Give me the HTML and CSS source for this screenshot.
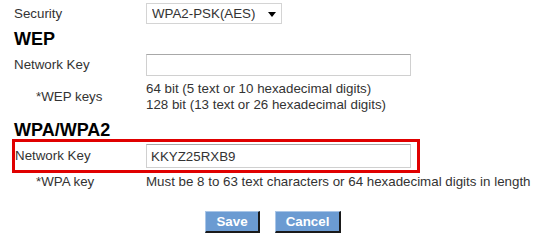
FILE: index.html
```html
<!DOCTYPE html>
<html lang="en">
<head>
    <meta charset="UTF-8">
    <title>Wireless Security</title>
    <link rel="stylesheet" href="styles.css">
</head>
<body>
    <div class="form">
        <div class="row row-security">
            <label class="label">Security</label>
            <div class="select-wrap">
                <select class="select">
                    <option>WPA2-PSK(AES)</option>
                </select>
                <svg class="select-arrow" width="8" height="5" viewBox="0 0 8 5"><path d="M0 0h8L4 5z" fill="#000"/></svg>
            </div>
        </div>

        <h2 class="heading heading-wep">WEP</h2>
        <div class="row row-key">
            <label class="label">Network Key</label>
            <input class="field" type="text" value="">
        </div>
        <div class="row row-hint row-hint-wep">
            <span class="label sub">*WEP keys</span>
            <div class="hint">
                64 bit (5 text or 10 hexadecimal digits)<br>
                128 bit (13 text or 26 hexadecimal digits)
            </div>
        </div>

        <h2 class="heading heading-wpa">WPA/WPA2</h2>
        <div class="row highlight">
            <label class="label">Network Key</label>
            <input class="field field-wpa" type="text" value="KKYZ25RXB9">
        </div>
        <div class="row row-hint row-hint-wpa">
            <span class="label sub">*WPA key</span>
            <div class="hint">Must be 8 to 63 text characters or 64 hexadecimal digits in length</div>
        </div>

        <div class="actions">
            <button class="btn btn-save">Save</button>
            <button class="btn btn-cancel">Cancel</button>
        </div>
    </div>
</body>
</html>
```

FILE: styles.css
```css
body {
    margin: 0;
    background: #fff;
    color: #333;
    font-family: Arial, "Liberation Sans", sans-serif;
    font-size: 13.33px;
}
.form {
    width: 541px;
    padding: 3px 0 0 14px;
    box-sizing: border-box;
}
.row {
    display: flex;
    align-items: center;
}
.label {
    width: 132px;
    flex: none;
    line-height: 16px;
}
.label.sub {
    padding-left: 22px;
    box-sizing: border-box;
}
.row-security {
    height: 21px;
}
.select-wrap {
    position: relative;
}
.select {
    appearance: none;
    -webkit-appearance: none;
    width: 136px;
    height: 21px;
    margin: 0;
    padding: 0 0 0 5px;
    border: 1px solid #d4d4d4;
    border-radius: 0;
    background: #fff;
    color: #333;
    font-family: inherit;
    font-size: 13.33px;
}
.select-arrow {
    position: absolute;
    right: 6px;
    top: 9px;
    pointer-events: none;
}
.heading {
    margin: 0;
    color: #000;
    font-size: 18px;
    font-weight: bold;
}
.heading-wep {
    margin-top: 5px;
    line-height: 20px;
}
.row-key {
    margin-top: 5px;
}
.field {
    width: 265px;
    height: 22px;
    margin: 0;
    padding: 0 4px;
    box-sizing: border-box;
    border: 1px solid #d0d0d0;
    border-top-color: #a8a8a8;
    color: #333;
    font-family: inherit;
    font-size: 13.33px;
}
.row-hint {
    line-height: 16px;
}
.row-hint-wep {
    margin-top: 5px;
}
.heading-wpa {
    margin-top: 8px;
    line-height: 18px;
}
.highlight {
    width: 408px;
    margin-left: -2px;
    padding: 2px 0;
    border: 3px solid #e00000;
    box-sizing: border-box;
}
.highlight .label {
    width: 131px;
}
.field-wpa {
    height: 24px;
}
.row-hint-wpa {
    margin-top: 1px;
}
.actions {
    display: flex;
    gap: 15px;
    margin: 21px 0 0 191px;
}
.btn {
    height: 22px;
    padding: 0;
    background: #6b9bd2;
    color: #fff;
    font-family: inherit;
    font-size: 13.33px;
    font-weight: bold;
    border-style: solid;
    border-width: 1px 2px 2px 1px;
    border-color: #a9c6e8 #1a1a1a #1a1a1a #a9c6e8;
    cursor: pointer;
}
.btn-save {
    width: 55px;
}
.btn-cancel {
    width: 66px;
}
```
